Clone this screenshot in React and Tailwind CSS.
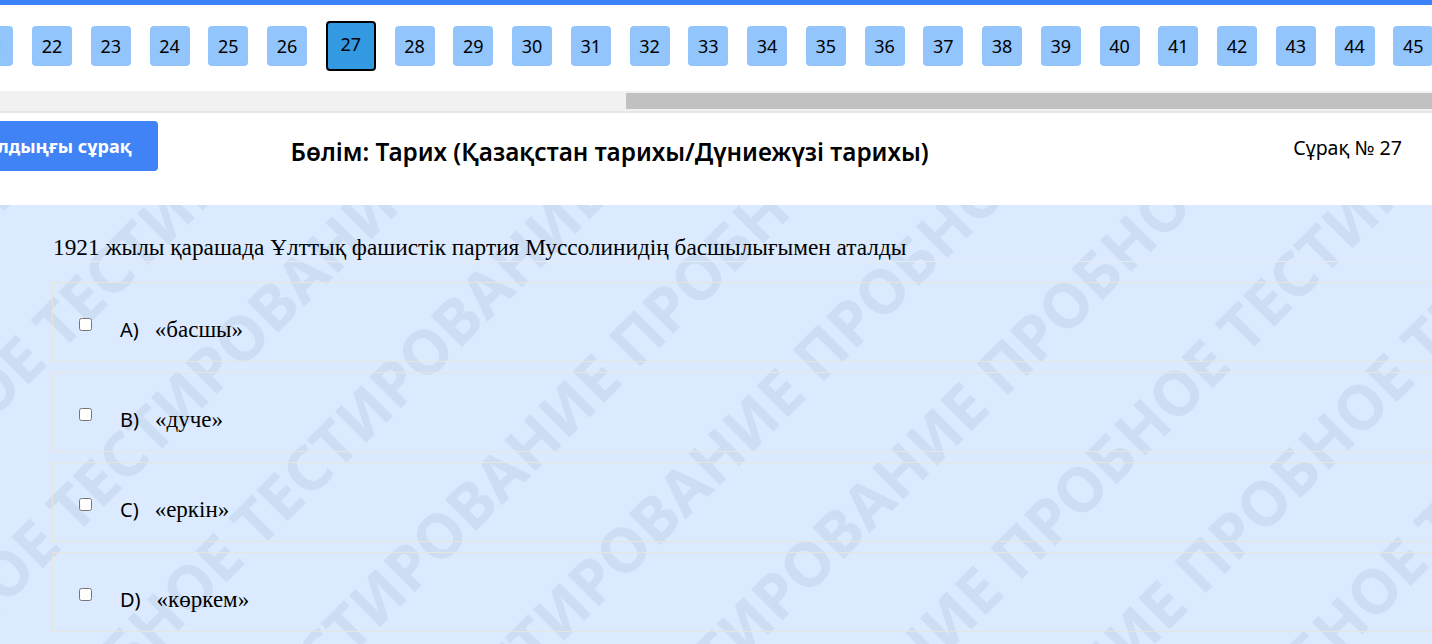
import React from "react";

const ui = { fontFamily: '"Noto Sans", "Open Sans", sans-serif' };
const serif = { fontFamily: '"Liberation Serif", "Times New Roman", serif' };

function Watermark() {
  const lines = [];
  for (let i = -12; i < 12; i++) {
    lines.push(
      <text key={i} x={-1500 + (i % 2) * 120} y={i * 140} fontSize="62" fontWeight="700" fill="#cddef4" style={{ fontFamily: '"Noto Sans", "Liberation Sans", sans-serif' }}>
        {"ПРОБНОЕ ТЕСТИРОВАНИЕ ПРОБНОЕ ТЕСТИРОВАНИЕ ПРОБНОЕ ТЕСТИРОВАНИЕ ПРОБНОЕ ТЕСТИРОВАНИЕ ПРОБНОЕ ТЕСТИРОВАНИЕ ПРОБНОЕ ТЕСТИРОВАНИЕ"}
      </text>
    );
  }
  return (
    <svg className="absolute inset-0 w-full h-full pointer-events-none" xmlns="http://www.w3.org/2000/svg">
      <g transform="translate(700 300) rotate(-45)">{lines}</g>
    </svg>
  );
}

export default function App() {
  const nums = [];
  for (let n = 21; n <= 50; n++) nums.push(n);
  const options = [
    ["A)", "«басшы»"],
    ["B)", "«дуче»"],
    ["C)", "«еркін»"],
    ["D)", "«көркем»"],
  ];
  return (
    <div className="w-[1432px] h-[644px] overflow-hidden bg-white flex flex-col" style={ui}>
      <div className="h-[5px] bg-[#3b82f6] shrink-0" />
      <div className="overflow-hidden shrink-0">
        <div className="flex items-center gap-[18.76px] pt-[16px] pb-[20px] -ml-[26.76px] w-max">
          {nums.map((n) =>
            n === 27 ? (
              <div key={n} className="w-[50px] h-[50px] shrink-0 rounded-[4px] bg-[#3399e0] border-2 border-black flex items-center justify-center text-[18px] text-black pb-[3px]">
                {n}
              </div>
            ) : (
              <div key={n} className="w-10 h-10 shrink-0 rounded-[4px] bg-[#93c5fd] flex items-center justify-center text-[18px] text-black pt-[1px]">
                {n}
              </div>
            )
          )}
        </div>
      </div>
      <div className="h-[20px] bg-[#f1f1f1] py-[2px] flex shrink-0">
        <div className="ml-[626px] flex-1 bg-[#c1c1c1]" />
      </div>
      <div className="h-[2px] bg-[#e6e6ea] shrink-0" />
      <div className="h-[92px] flex items-start shrink-0 bg-white">
        <button className="-ml-[35px] mt-[8px] h-[50px] pl-5 pr-[26px] rounded-[4px] bg-[#3f83f6] text-white font-bold text-[18px] whitespace-nowrap shrink-0">
          Алдыңғы сұрақ
        </button>
        <div className="ml-[133px] mt-[21px] text-[24.3px] font-semibold text-black whitespace-nowrap">
          Бөлім: Тарих (Қазақстан тарихы/Дүниежүзі тарихы)
        </div>
        <div className="ml-auto mr-[30px] mt-[20px] text-[19.6px] text-black whitespace-nowrap">Сұрақ № 27</div>
      </div>
      <div className="relative flex-1 bg-[#dbeafe]">
        <Watermark />
        <div className="relative pl-[52px] pt-[28px]">
          <p className="text-[23.3px] leading-[28px] text-black border-b border-[#e6ebf2] pl-[1px] whitespace-nowrap" style={serif}>
            1921 жылы қарашада Ұлттық фашистік партия Муссолинидің басшылығымен аталды
          </p>
          <div className="mt-[20px] flex flex-col gap-[10px]">
            {options.map(([l, t]) => (
              <div key={l} className="h-[80px] border border-[#e8e5df] border-r-0 flex items-start pl-[26px] pt-[35px]">
                <input type="checkbox" className="m-0 w-[13px] h-[13px] shrink-0" />
                <div className="ml-[28px] flex items-baseline leading-[24px]">
                  <span className="text-[20px] text-black">{l}</span>
                  <span className="ml-[16px] text-[23px] text-black" style={serif}>{t}</span>
                </div>
              </div>
            ))}
          </div>
        </div>
      </div>
    </div>
  );
}
